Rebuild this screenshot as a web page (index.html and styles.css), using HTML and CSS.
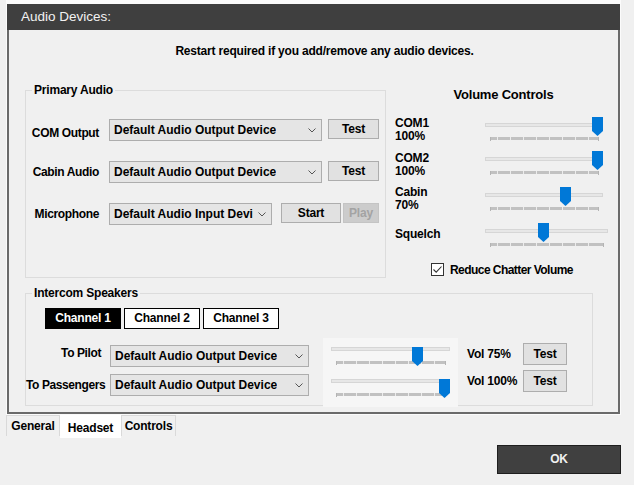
FILE: index.html
```html
<!DOCTYPE html>
<html>
<head>
<meta charset="utf-8">
<link rel="stylesheet" href="styles.css">
</head>
<body>
<div class="frame">
  <div class="window">
    <div class="header">Audio Devices:</div>
    <div class="content">
      <div class="notice">Restart required if you add/remove any audio devices.</div>
      <div class="main">
        <fieldset class="group primary">
          <legend>Primary Audio</legend>
          <div class="prow">
            <div class="plabel low">COM Output</div>
            <div class="combo w213"><span class="ctext">Default Audio Output Device</span><svg class="chev" viewBox="0 0 8 5"><path d="M0.5 0.5L4 4L7.5 0.5"/></svg></div>
            <div class="btn test">Test</div>
          </div>
          <div class="prow">
            <div class="plabel">Cabin Audio</div>
            <div class="combo w213"><span class="ctext">Default Audio Output Device</span><svg class="chev" viewBox="0 0 8 5"><path d="M0.5 0.5L4 4L7.5 0.5"/></svg></div>
            <div class="btn test">Test</div>
          </div>
          <div class="prow">
            <div class="plabel">Microphone</div>
            <div class="combo w163"><span class="ctext">Default Audio Input Devi</span><svg class="chev" viewBox="0 0 8 5"><path d="M0.5 0.5L4 4L7.5 0.5"/></svg></div>
            <div class="btn start">Start</div>
            <div class="btn play">Play</div>
          </div>
        </fieldset>
        <div class="vol">
          <div class="vtitle">Volume Controls</div>
          <div class="vgrid">
            <div class="vlabel">COM1<br>100%</div>
            <div class="slider"><div class="track"></div><div class="ticks"></div><svg class="thumb" style="--v:1" viewBox="0 0 11 19"><path d="M0 0H11V14L5.5 19L0 14Z"/></svg></div>
            <div class="vlabel p1">COM2<br>100%</div>
            <div class="slider"><div class="track"></div><div class="ticks"></div><svg class="thumb" style="--v:1" viewBox="0 0 11 19"><path d="M0 0H11V14L5.5 19L0 14Z"/></svg></div>
            <div class="vlabel">Cabin<br>70%</div>
            <div class="slider m1"><div class="track"></div><div class="ticks"></div><svg class="thumb" style="--v:0.7" viewBox="0 0 11 19"><path d="M0 0H11V14L5.5 19L0 14Z"/></svg></div>
            <div class="vlabel p5">Squelch</div>
            <div class="slider wide"><div class="track"></div><div class="ticks"></div><svg class="thumb" style="--v:0.47" viewBox="0 0 11 19"><path d="M0 0H11V14L5.5 19L0 14Z"/></svg></div>
          </div>
          <div class="chkrow">
            <div class="chk"><svg viewBox="0 0 11 11"><path d="M1.5 5.5L4.2 8.2L9.5 2.5"/></svg></div>
            <span class="chktext">Reduce Chatter Volume</span>
          </div>
        </div>
      </div>
      <fieldset class="group intercom">
        <legend>Intercom Speakers</legend>
        <div class="channels">
          <div class="ch on">Channel 1</div>
          <div class="ch">Channel 2</div>
          <div class="ch">Channel 3</div>
        </div>
        <div class="ibody">
          <div class="devices">
            <div class="irow">
              <div class="ilabel high">To Pilot</div>
              <div class="combo w199"><span class="ctext">Default Audio Output Device</span><svg class="chev" viewBox="0 0 8 5"><path d="M0.5 0.5L4 4L7.5 0.5"/></svg></div>
            </div>
            <div class="irow">
              <div class="ilabel">To Passengers</div>
              <div class="combo w199"><span class="ctext">Default Audio Output Device</span><svg class="chev" viewBox="0 0 8 5"><path d="M0.5 0.5L4 4L7.5 0.5"/></svg></div>
            </div>
          </div>
          <div class="spanel">
            <div class="slider isl"><div class="track"></div><div class="ticks"></div><svg class="thumb" style="--v:0.75" viewBox="0 0 11 19"><path d="M0 0H11V14L5.5 19L0 14Z"/></svg></div>
            <div class="slider isl"><div class="track"></div><div class="ticks"></div><svg class="thumb" style="--v:1" viewBox="0 0 11 19"><path d="M0 0H11V14L5.5 19L0 14Z"/></svg></div>
          </div>
          <div class="vols">
            <div class="vrow"><div class="vlab">Vol 75%</div><div class="btn t2">Test</div></div>
            <div class="vrow"><div class="vlab">Vol 100%</div><div class="btn t2">Test</div></div>
          </div>
        </div>
      </fieldset>
    </div>
  </div>
</div>
<div class="tabs">
  <div class="tab t-general">General</div>
  <div class="tab t-headset sel">Headset</div>
  <div class="tab t-controls">Controls</div>
</div>
<div class="footer"><div class="ok">OK</div></div>
</body>
</html>
```

FILE: styles.css
```css
* { box-sizing: border-box; }
html, body { margin: 0; padding: 0; }
body {
  width: 634px;
  height: 485px;
  overflow: hidden;
  background: #f0f0f0;
  color: #000;
  font-family: "Liberation Sans", Arial, sans-serif;
  font-size: 12px;
  font-weight: bold;
  letter-spacing: -0.2px;
}

.frame {
  margin-left: 6px;
  width: 615px;
  height: 415px;
  border: 1px solid #fbfbfb;
  border-top-width: 4px;
}
.window {
  height: 410px;
  border: 2px solid #6a6a6a;
  border-top: 0;
  display: flex;
  flex-direction: column;
}
.header {
  height: 26px;
  margin: 0 -2px;
  padding-left: 14px;
  background: #3f3f3f;
  color: #f2f2f2;
  font-weight: normal;
  font-size: 13.5px;
  letter-spacing: 0;
  line-height: 26px;
}
.content { flex: 1; padding-top: 13px; }

.notice {
  margin-left: 22px;
  text-align: center;
  line-height: 16px;
}

.main {
  display: flex;
  align-items: flex-start;
  margin: 24px 0 0 16px;
}

.group {
  margin: 0;
  padding: 0;
  min-width: 0;
  border: 1px solid #dcdcdc;
}
.group legend {
  margin-left: 6px;
  padding: 0 2px;
  line-height: 15px;
  font-size: 12px;
}

.primary {
  width: 361px;
  height: 195px;
  padding-top: 21px;
}
.prow {
  display: flex;
  align-items: flex-start;
  height: 22px;
  margin-bottom: 20px;
}
.plabel {
  width: 73px;
  margin-right: 10px;
  text-align: right;
  line-height: 22px;
  white-space: nowrap;
  letter-spacing: -0.35px;
}
.plabel.low { padding-top: 3px; }

.combo {
  display: flex;
  align-items: center;
  justify-content: space-between;
  height: 22px;
  padding: 0 5px 0 4px;
  background: #e5e5e5;
  border: 1px solid #adadad;
  white-space: nowrap;
  overflow: hidden;
}
.w213 { width: 213px; }
.w163 { width: 163px; }
.w199 { width: 199px; }
.ctext { overflow: hidden; letter-spacing: 0; }
.chev {
  flex: none;
  width: 8px;
  height: 5px;
  fill: none;
  stroke: #555;
  stroke-width: 1;
}

.btn {
  height: 20px;
  background: #e1e1e1;
  border: 1px solid #adadad;
  text-align: center;
  line-height: 18px;
}
.btn.test { width: 51px; margin-left: 6px; }
.btn.start { width: 60px; margin-left: 9px; }
.btn.play {
  width: 36px;
  margin-left: 2px;
  background: #cccccc;
  border-color: #c4c4c4;
  color: #a3a3a3;
}

.vol { width: 217px; margin-left: 9px; }
.vtitle {
  padding-top: 3px;
  font-size: 13px;
  line-height: 17px;
  text-align: center;
}
.vgrid {
  display: grid;
  grid-template-columns: 90px 118px;
  grid-template-rows: 34px 35px 37px 24px;
  margin-top: 14px;
}
.vlabel { line-height: 13px; }
.vlabel.p1 { padding-top: 1px; }
.vlabel.p5 { padding-top: 5px; }

.slider {
  position: relative;
  width: 118px;
  height: 24px;
}
.slider.wide { width: 123px; }
.slider.m1 { margin-top: 1px; }
.track {
  margin-top: 6px;
  height: 4px;
  background: #e7e7e7;
  border: 1px solid #d6d6d6;
}
.ticks {
  position: relative;
  margin: 10px 4px 0 5px;
  height: 3px;
  background: repeating-linear-gradient(90deg, #c1c1c1 0 12px, #ececec 12px 13px);
  background-position: -5px 0;
}
.ticks::before, .ticks::after {
  content: "";
  position: absolute;
  top: 0;
  width: 1px;
  height: 4px;
  background: #b4b4b4;
}
.ticks::before { left: 0; }
.ticks::after { right: 0; }
.thumb {
  position: absolute;
  top: 0;
  left: calc(var(--v) * (100% - 11px));
  width: 11px;
  height: 19px;
  fill: #0078d7;
}

.chkrow {
  display: flex;
  align-items: center;
  height: 13px;
  margin-top: 16px;
  padding-left: 36px;
}
.chktext { letter-spacing: -0.55px; }
.chk {
  width: 13px;
  height: 13px;
  margin-right: 6px;
  border: 1px solid #333;
  background: #fff;
}
.chk svg {
  display: block;
  width: 11px;
  height: 11px;
  fill: none;
  stroke: #333;
  stroke-width: 1.1;
}

.intercom {
  width: 568px;
  height: 120px;
  margin: 8px 0 0 16px;
}
.channels {
  display: flex;
  gap: 3px;
  margin: 7px 0 0 19px;
}
.ch {
  width: 76px;
  height: 21px;
  background: #fff;
  border: 1px solid #000;
  text-align: center;
  line-height: 19px;
}
.ch.on { background: #000; color: #fff; }

.ibody {
  display: flex;
  align-items: flex-start;
  margin-top: 9px;
}
.devices { padding-top: 7px; }
.irow { display: flex; height: 22px; }
.irow + .irow { margin-top: 7px; }
.ilabel {
  width: 75px;
  margin-right: 9px;
  text-align: right;
  line-height: 22px;
  white-space: nowrap;
  letter-spacing: -0.4px;
}
.ilabel.high { line-height: 16px; }

.spanel {
  width: 135px;
  height: 69px;
  margin-left: 14px;
  padding: 3px 0 0 8px;
  background: #f6f6f6;
}
.slider.isl { width: 119px; }
.slider.isl + .slider.isl { margin-top: 8px; }

.vols { margin-left: 9px; padding-top: 5px; }
.vrow { display: flex; align-items: center; height: 22px; }
.vrow + .vrow { margin-top: 5px; }
.vlab { width: 56px; white-space: nowrap; }
.btn.t2 { width: 44px; height: 22px; line-height: 20px; }

.tabs {
  display: flex;
  align-items: flex-start;
  margin-left: 6px;
  height: 23px;
}
.tab {
  height: 21px;
  background: #f0f0f0;
  border: 1px solid #d9d9d9;
  border-bottom: 0;
  text-align: center;
  line-height: 20px;
}
.t-general { width: 54px; }
.t-headset { width: 61px; }
.t-controls { width: 55px; }
.tab.sel {
  height: 23px;
  background: #fff;
  border-color: #fff;
  padding-top: 2px;
}

.footer {
  display: flex;
  justify-content: flex-end;
  margin-top: 7px;
  padding-right: 13px;
}
.ok {
  width: 124px;
  height: 29px;
  background: #404040;
  border: 1px solid #1e1e1e;
  color: #f0f0f0;
  text-align: center;
  line-height: 27px;
}
```
